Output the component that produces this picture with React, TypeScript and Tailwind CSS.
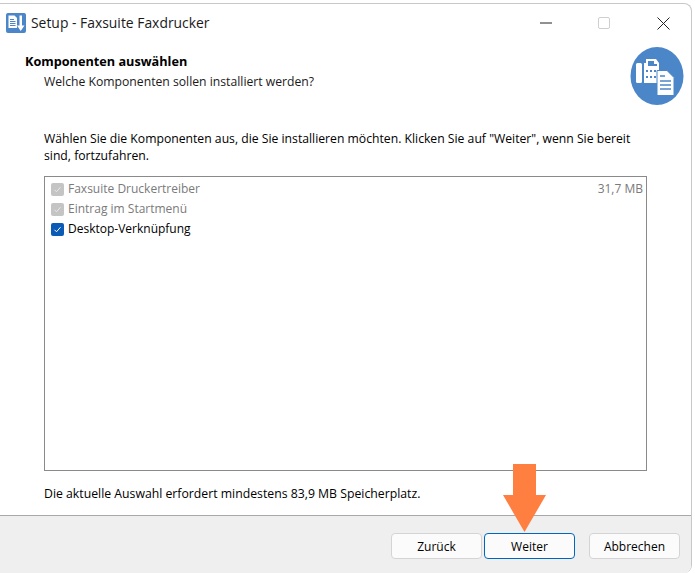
function AppIcon() {
  return (
    <svg width="20" height="20" viewBox="0 0 20 20">
      <rect x="0" y="0" width="20" height="20" rx="2" fill="#4a86c8" />
      <path d="M2.5 2.5h6l2.5 2.5v10H2.5z" fill="#fff" />
      <path d="M4 6.5h4M4 8.5h5.5M4 10.5h5.5M4 12.5h5.5" stroke="#4a86c8" strokeWidth="1" />
      <path d="M13.5 2.5h2.5v10h2.5L14.7 18 11 12.5h2.5z" fill="#fff" />
    </svg>
  );
}

function FaxLogo() {
  return (
    <svg width="54" height="59" viewBox="0 0 54 59">
      <ellipse cx="27" cy="29" rx="26.5" ry="29" fill="#4a86c8" />
      <rect x="6" y="16" width="6" height="20" rx="1.5" fill="#fff" />
      <path d="M14 16h2v-4h10l3 4v20H14z" fill="#fff" />
      <path d="M18 14h6v3h3v2h-9z" fill="#4a86c8" />
      <path d="M16 23h2v2h-2zM20 23h2v2h-2zM24 23h2v2h-2zM16 29h2v2h-2zM20 29h2v2h-2zM24 29h2v2h-2z" fill="#4a86c8" />
      <path d="M27 23.5h10l7 7v18H27z" fill="#fff" stroke="#4a86c8" strokeWidth="1" />
      <path d="M30 29h5M30 34h11M30 38h11M30 42h11" stroke="#4a86c8" strokeWidth="1.5" />
    </svg>
  );
}

function Check({ on }: { on: boolean }) {
  return (
    <span className={`flex h-[13px] w-[13px] items-center justify-center rounded-[2px] ${on ? 'bg-[#0a5bb5]' : 'bg-[#c4c4c4]'}`}>
      <svg width="9" height="9" viewBox="0 0 9 9" fill="none">
        <path d="M1.5 4.8 3.5 6.8 7.5 2.2" stroke={on ? '#fff' : '#e8e8e8'} strokeWidth="1" />
      </svg>
    </span>
  );
}

function Row({ label, size, on }: { label: string; size?: string; on?: boolean }) {
  return (
    <div className={`flex h-5 items-center gap-[4px] pl-[6px] pr-[3px] text-[12px] ${on ? 'text-black' : 'text-[#7a7a7a]'}`}>
      <Check on={!!on} />
      <span className="flex-1">{label}</span>
      {size && <span>{size}</span>}
    </div>
  );
}

function Btn({ label, active, className }: { label: string; active?: boolean; className: string }) {
  return (
    <button className={`h-[26px] rounded-[4px] border bg-[#fbfbfb] pt-[1px] text-[12px] text-black ${active ? 'border-[#0067c0]' : 'border-[#d4d4d4]'} ${className}`}>
      {label}
    </button>
  );
}

export default function App() {
  return (
    <div className="relative h-[573px] w-[695px] overflow-hidden bg-white font-['Open_Sans','Noto_Sans',sans-serif] text-[12.2px] text-[#1a1a1a]">
      <div className="mr-[3px] mt-[3px] flex h-[570px] flex-col overflow-hidden rounded-tr-[8px] rounded-br-[8px] border-t border-r border-[#c8c8c8] bg-white">
        <div className="flex h-[38px] shrink-0 items-center pl-[6px]">
          <AppIcon />
          <span className="ml-[5px] flex-1 text-[13.9px] leading-none">Setup - Faxsuite Faxdrucker</span>
          <svg width="12" height="2" viewBox="0 0 12 2" className="mr-[46px]"><path d="M0 1h12" stroke="#222" /></svg>
          <span className="mr-[47px] h-[12px] w-[12px] rounded-[2px] border border-[#cfcfcf]" />
          <svg width="13" height="13" viewBox="0 0 13 13" className="mr-[21px]"><path d="M.5.5l12 12M12.5.5l-12 12" stroke="#222" /></svg>
        </div>
        <div className="flex h-[69px] shrink-0 justify-between pl-[25px] pr-[7px]">
          <div className="pt-[11px]">
            <div className="text-[12.7px] font-bold leading-[17px] text-black">Komponenten auswählen</div>
            <div className="mt-[3px] pl-[19px] leading-[17px]">Welche Komponenten sollen installiert werden?</div>
          </div>
          <div className="pt-[5px]"><FaxLogo /></div>
        </div>
        <div className="flex flex-1 flex-col pl-[44px] pr-[45px] pt-[19px]">
          <p className="leading-[17px] text-black">
            Wählen Sie die Komponenten aus, die Sie installieren möchten. Klicken Sie auf "Weiter", wenn Sie bereit sind, fortzufahren.
          </p>
          <div className="mt-[12px] h-[295px] w-[603px] border border-[#8a8a8a] pt-[2px]">
            <Row label="Faxsuite Druckertreiber" size="31,7 MB" />
            <Row label="Eintrag im Startmenü" />
            <Row label="Desktop-Verknüpfung" on />
          </div>
          <p className="mt-[14px] text-[12.25px] leading-[17px] text-black">Die aktuelle Auswahl erfordert mindestens 83,9 MB Speicherplatz.</p>
        </div>
        <div className="flex h-[58px] shrink-0 items-start border-t border-[#a8a8a8] bg-[#efefef] pl-[391px] pt-[17px]">
          <Btn label="Zurück" className="w-[91px]" />
          <Btn label="Weiter" active className="ml-[2px] w-[91px]" />
          <Btn label="Abbrechen" className="ml-[14px] w-[91px]" />
        </div>
      </div>
      <svg width="44" height="70" viewBox="0 0 44 70" className="absolute left-[503px] top-[464px]">
        <path d="M10 0h23v31h10L21.5 68 0 31h10z" fill="#ff7f41" />
      </svg>
    </div>
  );
}
